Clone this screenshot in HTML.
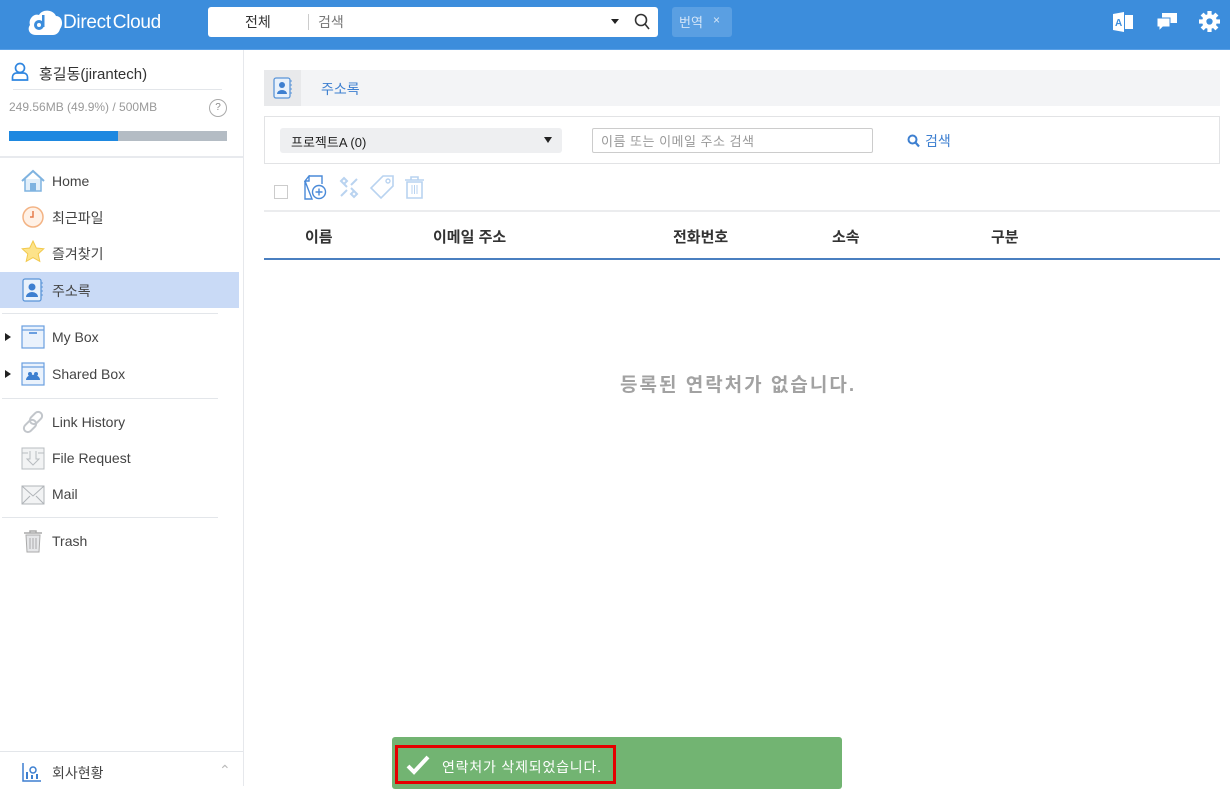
<!DOCTYPE html>
<html><head><meta charset="utf-8"><style>
*{margin:0;padding:0;box-sizing:border-box}
body{width:1230px;height:786px;overflow:hidden;position:relative;background:#fff;font-family:"Liberation Sans","Noto Sans CJK KR",sans-serif;font-size:14px;color:#333}
.a{position:absolute}
.hdr{left:0;top:0;width:1230px;height:50px;background:#3c8ddc;border-bottom:1px solid #5aa0e6}
.nav{left:52px;font-size:14px;color:#444}
.ico{left:21px;width:24px;height:24px}
.sep{left:2px;width:216px;height:1px;background:#e3e6ea}
.th{top:226px;font-weight:bold;font-size:15px;color:#333}
</style></head><body>
<div class="a hdr"></div>
<svg class="a" style="left:27px;top:10px" width="36" height="26" viewBox="0 0 36 26"><path d="M9 25 C2 25 0 19 3 15 C1 9 7 3 12 5 C15 -1 26 -1 29 6 C35 6 37 14 33 19 C32 23 29 25 26 25 Z" fill="#fff"/><circle cx="12" cy="15" r="5" fill="#3c8ddc"/><circle cx="12" cy="15" r="2" fill="#fff"/><rect x="15" y="5" width="2.5" height="12" fill="#3c8ddc"/></svg>
<div class="a" style="left:63px;top:12px;font-size:19px;color:#fff;letter-spacing:-0.3px;word-spacing:-3px">Direct Cloud</div>
<div class="a" style="left:208px;top:7px;width:450px;height:30px;background:#fff;border-radius:3px"></div>
<div class="a" style="left:245px;top:12px;font-size:14px;color:#333">전체</div>
<div class="a" style="left:308px;top:14px;width:1px;height:16px;background:#ccc"></div>
<div class="a" style="left:318px;top:12px;font-size:14px;color:#777">검색</div>
<div class="a" style="left:611px;top:19px;width:0;height:0;border-left:4px solid transparent;border-right:4px solid transparent;border-top:5px solid #222"></div>
<svg class="a" style="left:634px;top:13px" width="16" height="17" viewBox="0 0 16 17"><circle cx="7" cy="7" r="5.5" fill="none" stroke="#333" stroke-width="1.6"/><path d="M11 11l4 5" stroke="#333" stroke-width="1.6"/></svg>
<div class="a" style="left:672px;top:7px;width:60px;height:30px;background:#5a9fe2;border-radius:3px"></div>
<div class="a" style="left:679px;top:12px;font-size:13px;color:#d5e6f8">번역</div>
<div class="a" style="left:713px;top:13px;font-size:12px;color:#d5e6f8">×</div>
<svg class="a" style="left:1112px;top:11px" width="22" height="22" viewBox="0 0 22 22"><path d="M1 3 L12 1 L12 21 L1 19Z" fill="#fff"/><rect x="13" y="4" width="8" height="14" fill="#fff"/><text x="3" y="15" font-size="10" font-weight="bold" fill="#3c8ddc" font-family="Liberation Sans">A</text></svg>
<svg class="a" style="left:1156px;top:12px" width="22" height="20" viewBox="0 0 22 20"><rect x="6" y="1" width="15" height="10" fill="#fff"/><path d="M1 6h13v9H7l-4 4v-4H1z" fill="#fff" stroke="#3c8ddc" stroke-width="1"/></svg>
<svg class="a" style="left:1199px;top:11px" width="21" height="21" viewBox="0 0 20 20"><g fill="#fff"><circle cx="10" cy="10" r="7"/><rect x="8" y="0" width="4" height="20"/><rect x="0" y="8" width="20" height="4"/><rect x="8" y="0" width="4" height="20" transform="rotate(45 10 10)"/><rect x="8" y="0" width="4" height="20" transform="rotate(-45 10 10)"/></g><circle cx="10" cy="10" r="3" fill="#3c8ddc"/></svg>

<div class="a" style="left:243px;top:50px;width:1px;height:736px;background:#e6e8ec"></div>
<svg class="a" style="left:11px;top:62px" width="18" height="19" viewBox="0 0 18 19"><circle cx="9" cy="6" r="4.5" fill="none" stroke="#2f86e0" stroke-width="1.7"/><path d="M1.5 18v-3a4 4 0 0 1 4-4h7a4 4 0 0 1 4 4v3z" fill="none" stroke="#2f86e0" stroke-width="1.7"/></svg>
<div class="a" style="left:39px;top:63px;font-size:15px;color:#333">홍길동(jirantech)</div>
<div class="a" style="left:13px;top:89px;width:209px;height:1px;background:#e3e6ea"></div>
<div class="a" style="left:9px;top:100px;font-size:12px;color:#999">249.56MB (49.9%) / 500MB</div>
<div class="a" style="left:209px;top:99px;width:18px;height:18px;border:1px solid #aaa;border-radius:50%;font-size:10px;color:#888;text-align:center;line-height:16px">?</div>
<div class="a" style="left:9px;top:131px;width:218px;height:10px;background:#b4bcc4"></div>
<div class="a" style="left:9px;top:131px;width:109px;height:10px;background:#1e88e0"></div>
<div class="a" style="left:0;top:156px;width:243px;height:2px;background:#e8eaee"></div>

<svg class="a ico" style="top:169px" viewBox="0 0 24 24"><path d="M1 12L12 2l11 10" fill="none" stroke="#7fb3e0" stroke-width="2"/><path d="M4 10v12h16V10" fill="#e2effa" stroke="#7fb3e0" stroke-width="1.5"/><rect x="9" y="14" width="6" height="8" fill="#7fb3e0"/></svg>
<div class="a nav" style="top:173px">Home</div>
<svg class="a ico" style="top:205px" viewBox="0 0 24 24"><circle cx="12" cy="12" r="10" fill="#fff1e6" stroke="#f3b384" stroke-width="1.5"/><path d="M12 6v6H9" fill="none" stroke="#e57a4a" stroke-width="1.5"/></svg>
<div class="a nav" style="top:208px">최근파일</div>
<svg class="a ico" style="top:240px" viewBox="0 0 24 24"><path d="M12 1l3.3 7 7.5.8-5.6 5.1 1.6 7.5L12 17.6 5.2 21.4l1.6-7.5L1.2 8.8l7.5-.8z" fill="#fde38a" stroke="#f2c94c" stroke-width="1"/></svg>
<div class="a nav" style="top:244px">즐겨찾기</div>
<div class="a" style="left:0;top:272px;width:239px;height:36px;background:#c9daf6"></div>
<svg class="a ico" style="top:278px" viewBox="0 0 24 24"><rect x="2" y="1" width="18" height="22" rx="2" fill="#e8f1fb" stroke="#5a95d8" stroke-width="1.3"/><path d="M20 5h2M20 9h2M20 13h2M20 17h2" stroke="#5a95d8"/><circle cx="11" cy="9" r="3.5" fill="#3d7fd0"/><path d="M5 19a6 5 0 0 1 12 0z" fill="#3d7fd0"/></svg>
<div class="a nav" style="top:281px">주소록</div>
<div class="a sep" style="top:313px"></div>
<div class="a" style="left:5px;top:333px;border-top:4px solid transparent;border-bottom:4px solid transparent;border-left:6px solid #222"></div>
<svg class="a ico" style="top:325px" viewBox="0 0 24 24"><rect x="1" y="1" width="22" height="22" fill="#eaf2fc" stroke="#6a9fe0" stroke-width="1.2"/><path d="M1 5h22" stroke="#6a9fe0" stroke-width="1.2"/><rect x="8" y="7" width="8" height="2" fill="#6a9fe0"/></svg>
<div class="a nav" style="top:329px">My Box</div>
<div class="a" style="left:5px;top:370px;border-top:4px solid transparent;border-bottom:4px solid transparent;border-left:6px solid #222"></div>
<svg class="a ico" style="top:362px" viewBox="0 0 24 24"><rect x="1" y="1" width="22" height="22" fill="#eaf2fc" stroke="#6a9fe0" stroke-width="1.2"/><path d="M1 5h22" stroke="#6a9fe0" stroke-width="1.2"/><circle cx="9" cy="12" r="2" fill="#3d7fd0"/><circle cx="15" cy="12" r="2" fill="#3d7fd0"/><path d="M5 18a4 3 0 0 1 14 0z" fill="#3d7fd0"/></svg>
<div class="a nav" style="top:366px">Shared Box</div>
<div class="a sep" style="top:398px"></div>
<svg class="a ico" style="top:410px" viewBox="0 0 24 24"><g fill="none" stroke="#c2c6cb" stroke-width="2"><rect x="11" y="1" width="8" height="14" rx="4" transform="rotate(45 15 8)"/><rect x="5" y="9" width="8" height="14" rx="4" transform="rotate(45 9 16)"/></g></svg>
<div class="a nav" style="top:414px">Link History</div>
<svg class="a ico" style="top:446px" viewBox="0 0 24 24"><rect x="1" y="2" width="22" height="21" fill="#f2f3f4" stroke="#b8bcc0"/><path d="M1 7h6M17 7h6M9 5v8H6l6 6 6-6h-3V5" fill="none" stroke="#b8bcc0"/></svg>
<div class="a nav" style="top:450px">File Request</div>
<svg class="a ico" style="top:483px" viewBox="0 0 24 24"><rect x="1" y="3" width="22" height="18" fill="#f2f3f4" stroke="#b0b4b8"/><path d="M1 3l11 10L23 3M1 21l8-8M23 21l-8-8" fill="none" stroke="#b0b4b8"/></svg>
<div class="a nav" style="top:486px">Mail</div>
<div class="a sep" style="top:517px"></div>
<svg class="a ico" style="top:529px" viewBox="0 0 24 24"><path d="M3 4h18M9 4V2h6v2" stroke="#aaa" fill="none" stroke-width="1.5"/><path d="M5 6h14l-1 17H6z" fill="#e6e7e9" stroke="#aaa"/><path d="M9 9v11M12 9v11M15 9v11" stroke="#aaa"/></svg>
<div class="a nav" style="top:533px">Trash</div>

<div class="a" style="left:0;top:751px;width:243px;height:1px;background:#e3e6ea"></div>
<svg class="a" style="left:22px;top:762px" width="20" height="20" viewBox="0 0 20 20"><path d="M1 1v18h18" stroke="#3d7fd0" stroke-width="1.5" fill="none"/><rect x="4" y="10" width="2" height="7" fill="#3d7fd0"/><circle cx="11" cy="8" r="3" fill="none" stroke="#3d7fd0" stroke-width="1.5"/><rect x="9" y="13" width="2" height="4" fill="#3d7fd0"/><rect x="14" y="12" width="2" height="5" fill="#3d7fd0"/></svg>
<div class="a" style="left:52px;top:763px;font-size:14px;color:#444">회사현황</div>
<div class="a" style="left:219px;top:762px;font-size:14px;color:#bbb">&#8963;</div>

<div class="a" style="left:264px;top:70px;width:956px;height:36px;background:#f3f4f6"></div>
<div class="a" style="left:264px;top:70px;width:37px;height:36px;background:#e8e9eb"></div>
<svg class="a" style="left:273px;top:77px" width="20" height="22" viewBox="0 0 20 22"><rect x="1" y="1" width="16" height="20" rx="2" fill="#e8f1fb" stroke="#5a95d8" stroke-width="1.3"/><path d="M17 4h2M17 8h2M17 12h2M17 16h2" stroke="#5a95d8"/><circle cx="9" cy="8" r="3" fill="#3d7fd0"/><path d="M4 17a5 4 0 0 1 10 0z" fill="#3d7fd0"/></svg>
<div class="a" style="left:321px;top:79px;font-size:14px;color:#3d7fd0">주소록</div>

<div class="a" style="left:264px;top:116px;width:956px;height:48px;border:1px solid #e2e3e5"></div>
<div class="a" style="left:280px;top:128px;width:282px;height:25px;background:#eeeff1;border-radius:3px"></div>
<div class="a" style="left:291px;top:132px;font-size:13px;color:#222">프로젝트A (0)</div>
<div class="a" style="left:544px;top:137px;border-left:4.5px solid transparent;border-right:4.5px solid transparent;border-top:6px solid #222"></div>
<div class="a" style="left:592px;top:128px;width:281px;height:25px;border:1px solid #ccc;border-radius:2px"></div>
<div class="a" style="left:601px;top:131px;font-size:13px;color:#999;letter-spacing:0.5px">이름 또는 이메일 주소 검색</div>
<svg class="a" style="left:907px;top:134px" width="13" height="14" viewBox="0 0 13 14"><circle cx="5.5" cy="5.5" r="4" fill="none" stroke="#3d7fd0" stroke-width="2"/><path d="M8.5 8.5l3.5 4" stroke="#3d7fd0" stroke-width="2.2"/></svg>
<div class="a" style="left:925px;top:131px;font-size:14px;color:#3d7fd0">검색</div>

<div class="a" style="left:274px;top:185px;width:14px;height:14px;border:1px solid #ccc"></div>
<svg class="a" style="left:304px;top:175px" width="24" height="25" viewBox="0 0 24 25"><path d="M5 1h13v8M8 24H1V6z M1 6l4-5v5z" fill="none" stroke="#4a8ad8" stroke-width="1.4"/><circle cx="15" cy="17" r="6.5" fill="#fff" stroke="#4a8ad8" stroke-width="1.4"/><path d="M15 13.5v7M11.5 17h7" stroke="#4a8ad8" stroke-width="1.4"/></svg>
<svg class="a" style="left:338px;top:176px" width="22" height="23" viewBox="0 0 22 23"><g fill="none" stroke="#b9d3f0" stroke-width="2"><path d="M3 5l6 6M13 12l6 6M6 2l3 3-3 3-3-3zM16 15l3 3-3 3-3-3z"/><path d="M19 3l-6 6M9 14l-6 6"/></g></svg>
<svg class="a" style="left:370px;top:175px" width="25" height="25" viewBox="0 0 25 25"><path d="M13 1h10v10L11 23 1 13z" fill="none" stroke="#b9d3f0" stroke-width="1.6"/><circle cx="18" cy="6" r="2" fill="none" stroke="#b9d3f0" stroke-width="1.4"/></svg>
<svg class="a" style="left:404px;top:176px" width="21" height="23" viewBox="0 0 21 23"><path d="M1 4h19M7 4V1h7v3" fill="none" stroke="#b9d3f0" stroke-width="1.6"/><path d="M3 6h15v16H3z" fill="none" stroke="#b9d3f0" stroke-width="1.6"/><path d="M8 9v9M10.5 9v9M13 9v9" stroke="#b9d3f0"/></svg>

<div class="a" style="left:264px;top:210px;width:956px;height:2px;background:#ebecee"></div>
<div class="a th" style="left:305px">이름</div>
<div class="a th" style="left:433px">이메일 주소</div>
<div class="a th" style="left:673px">전화번호</div>
<div class="a th" style="left:832px">소속</div>
<div class="a th" style="left:991px">구분</div>
<div class="a" style="left:264px;top:258px;width:956px;height:2px;background:#4a7fc0"></div>

<div class="a" style="left:620px;top:370px;font-size:19px;font-weight:bold;color:#a2a2a2;letter-spacing:2px">등록된 연락처가 없습니다.</div>

<div class="a" style="left:392px;top:737px;width:450px;height:52px;background:#72b472;border-radius:3px"></div>
<div class="a" style="left:395px;top:745px;width:221px;height:39px;border:3px solid #e50000"></div>
<svg class="a" style="left:406px;top:755px" width="24" height="20" viewBox="0 0 24 20"><path d="M2 11l6 6L22 2" fill="none" stroke="#fff" stroke-width="4"/></svg>
<div class="a" style="left:442px;top:757px;font-size:14px;color:#fff;letter-spacing:0.8px">연락처가 삭제되었습니다.</div>
</body></html>
